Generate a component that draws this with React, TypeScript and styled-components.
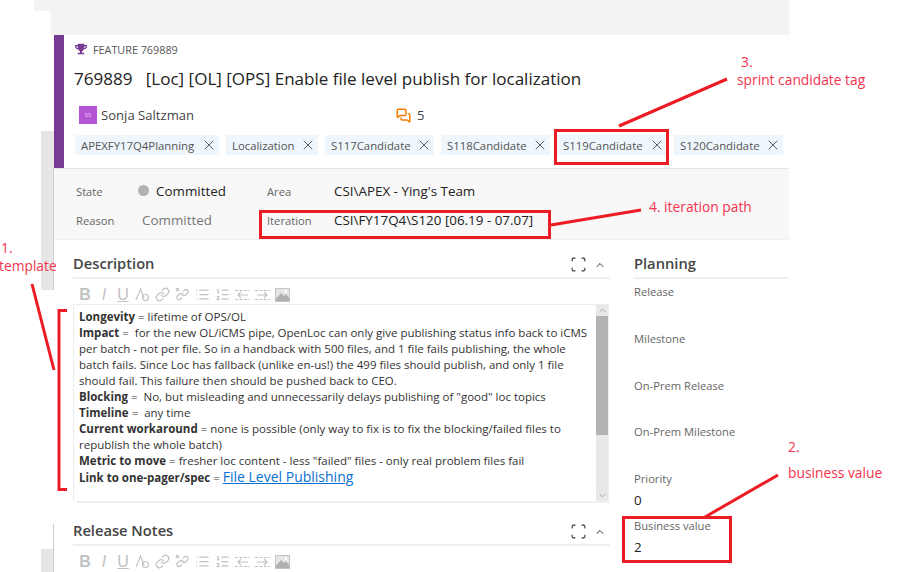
import * as React from 'react';
import styled, { createGlobalStyle } from 'styled-components';
import { FaTrophy } from 'react-icons/fa';
import { ChevronDown, ChevronUp, Link, List, ListOrdered, MessagesSquare, Scan, X } from 'lucide-react';

const GlobalStyle = createGlobalStyle`
    html, body {
        margin: 0;
        padding: 0;
        background: #ffffff;
    }
`;

const Page = styled.div`
    position: relative;
    width: 899px;
    height: 572px;
    overflow: hidden;
    display: grid;
    grid-template-columns: 54px 735px;
    font-family: "Open Sans", "Noto Sans", sans-serif;
    color: #222;
`;

const Gutter = styled.div`
    display: flex;
    flex-direction: column;
`;

const GutterBlock = styled.div<{ $h: number; $left?: number; $fill?: string; $rule?: boolean }>`
    height: ${p => p.$h}px;
    margin-left: ${p => p.$left || 0}px;
    background: ${p => p.$fill || 'transparent'};
    border-right: 1px solid ${p => (p.$rule ? '#cfcfcf' : 'transparent')};
    flex: none;
`;

const Main = styled.div`
    display: flex;
    flex-direction: column;
    min-width: 0;
`;

const TopBand = styled.div`
    height: 35px;
    background: #f3f3f3;
    flex: none;
`;

const Header = styled.header`
    height: 133px;
    box-sizing: border-box;
    border-left: 10px solid #773b93;
    padding: 5px 0 0 11px;
    flex: none;
`;

const TypeRow = styled.div`
    display: flex;
    align-items: center;
    gap: 6px;
    height: 18px;
    font-size: 10.8px;
    color: #555;
    svg { color: #773b93; width: 12px; height: 12px; }
`;

const Title = styled.h1`
    margin: 9px 0 0 -1px;
    font-size: 17.05px;
    line-height: 24px;
    font-weight: 400;
    color: #222;
    white-space: pre;
`;

const MetaRow = styled.div`
    display: flex;
    align-items: center;
    height: 20px;
    margin: 14px 0 0 4px;
    font-size: 13.1px;
    color: #444;
`;

const Avatar = styled.span`
    width: 18px;
    height: 18px;
    background: #b455d6;
    color: #e8c9f2;
    font-size: 6px;
    display: flex;
    align-items: center;
    justify-content: center;
    margin-right: 4px;
`;

const Comments = styled.span`
    display: flex;
    align-items: center;
    gap: 6px;
    margin-left: 202px;
    svg { color: #f57c00; }
`;

const TagRow = styled.div`
    display: flex;
    gap: 7px;
    margin-top: 10px;
`;

const Tag = styled.span`
    height: 20px;
    box-sizing: border-box;
    padding: 0 2px 0 6px;
    background: #eff6fc;
    font-size: 11.35px;
    color: #555;
    display: flex;
    align-items: center;
    justify-content: space-between;
    svg { color: #444; }
`;

const StateBlock = styled.section`
    height: 72px;
    box-sizing: border-box;
    background: #f8f8f8;
    border-top: 1px solid #e6e6e6;
    border-bottom: 1px solid #efefef;
    padding: 7px 0 0 22px;
    display: grid;
    grid-template-columns: 62px 129px 67px 1fr;
    grid-auto-rows: 29px;
    align-items: center;
    flex: none;
`;

const StateLabel = styled.span`
    font-size: 11.2px;
    color: #666;
    padding-top: 2px;
`;

const StateValue = styled.span<{ $muted?: boolean }>`
    font-size: 13.4px;
    color: ${p => (p.$muted ? '#777' : '#222')};
    padding-left: ${p => (p.$muted ? 4 : 0)}px;
    display: flex;
    align-items: center;
    gap: 7px;
`;

const Dot = styled.i`
    width: 11px;
    height: 11px;
    border-radius: 50%;
    background: #b2b2b2;
`;

const Columns = styled.div`
    display: grid;
    grid-template-columns: 537px 155px;
    gap: 24px;
    padding-left: 19px;
    flex: 1;
    min-height: 0;
`;

const EditorColumn = styled.div`
    display: flex;
    flex-direction: column;
    min-width: 0;
`;

const SectionHead = styled.div`
    height: 39px;
    box-sizing: border-box;
    border-bottom: 2px solid #efefef;
    display: flex;
    align-items: flex-end;
    justify-content: space-between;
    padding-bottom: 4px;
    flex: none;
`;

const SectionTitle = styled.h2`
    margin: 0;
    font-size: 14.7px;
    line-height: 20px;
    font-weight: 600;
    color: #444;
`;

const HeadIcons = styled.span`
    display: flex;
    align-items: center;
    gap: 7px;
    margin-right: 4px;
    color: #333;
`;

const Toolbar = styled.div`
    height: 25px;
    box-sizing: border-box;
    padding: 0 0 2px 5px;
    display: flex;
    align-items: flex-end;
    gap: 5px;
    color: #c2c2c2;
    flex: none;
    svg { flex: none; }
`;

const ToolLetter = styled.span<{ $kind: 'b' | 'i' | 'u' }>`
    width: 14px;
    text-align: center;
    font-size: 16px;
    line-height: 15px;
    font-family: "Liberation Sans", sans-serif;
    font-weight: ${p => (p.$kind === 'b' ? 700 : 400)};
    font-style: ${p => (p.$kind === 'i' ? 'italic' : 'normal')};
    text-decoration: ${p => (p.$kind === 'u' ? 'underline' : 'none')};
`;

const Editor = styled.div`
    width: 536px;
    height: 197px;
    box-sizing: border-box;
    border: 1px solid #ececec;
    border-bottom: none;
    display: flex;
    flex: none;
`;

const EditorText = styled.div`
    flex: 1;
    padding: 4px 0 0 5px;
    font-size: 11.5px;
    line-height: 16px;
    color: #333;
    b { font-weight: 700; }
    a { color: #0a6fd0; font-size: 14px; text-decoration: underline; }
`;

const ScrollBar = styled.div`
    width: 12px;
    background: #e8e8e8;
    display: flex;
    flex-direction: column;
    align-items: center;
    justify-content: space-between;
    color: #aaa;
    position: relative;
    flex: none;
`;

const ScrollThumb = styled.div`
    position: absolute;
    top: 11px;
    left: 0;
    right: 0;
    height: 119px;
    background: #b3b3b3;
`;

const EditorEnd = styled.div`
    width: 533px;
    margin-left: 4px;
    border-top: 2px solid #efefef;
    height: 0;
    flex: none;
`;

const Spacer = styled.div`
    height: 4px;
    flex: none;
`;

const PlanningColumn = styled.div`
    display: flex;
    flex-direction: column;
`;

const Field = styled.div`
    height: 46.8px;
    box-sizing: border-box;
    padding-top: 5px;
    flex: none;
`;

const FieldLabel = styled.div`
    font-size: 11.2px;
    line-height: 16px;
    color: #666;
`;

const FieldValue = styled.div`
    font-size: 13.4px;
    line-height: 18px;
    margin-top: 4px;
    color: #222;
`;

const Overlay = styled.svg`
    position: absolute;
    inset: 0;
    pointer-events: none;
`;

const Note = styled.span<{ $x: number; $y: number }>`
    position: absolute;
    left: ${p => p.$x}px;
    top: ${p => p.$y}px;
    font-size: 13.8px;
    line-height: 16px;
    color: #f5344e;
    white-space: nowrap;
`;

const tags: [string, number][] = [
    ['APEXFY17Q4Planning', 144],
    ['Localization', 92],
    ['S117Candidate', 109],
    ['S118Candidate', 109],
    ['S119Candidate', 110],
    ['S120Candidate', 109],
];

const ImageIcon = () => (
    <svg width="15" height="14" viewBox="0 0 15 14">
        <rect width="15" height="14" fill="#c4c4c4" />
        <rect x="1" y="1" width="13" height="9" fill="#e6e6e6" />
        <path d="M1 11 L6 5 L9 8 L11 6 L14 10 V13 H1 Z" fill="#b0b0b0" />
        <circle cx="11" cy="3.5" r="1.3" fill="#ffffff" />
    </svg>
);

const FontColorIcon = () => (
    <svg width="15" height="15" viewBox="0 0 15 15" fill="none" stroke="currentColor" strokeWidth="1.1">
        <path d="M1 13 L5.5 2 L9 11" />
        <circle cx="10.5" cy="10.5" r="3" />
    </svg>
);

const UnlinkIcon = () => (
    <svg width="15" height="15" viewBox="0 0 15 15" fill="none" stroke="currentColor" strokeWidth="1.2">
        <path d="M1 1 L4 4 M4 1 L1 4" />
        <path d="M6.5 8.5 L8.5 6.5" />
        <path d="M8 4.5 L10 2.5 a2.3 2.3 0 0 1 3 3 L10.5 8 a2.3 2.3 0 0 1 -2.5 0.5" />
        <path d="M7 10.5 L5 12.5 a2.3 2.3 0 0 1 -3 -3 L4.5 7 a2.3 2.3 0 0 1 2.5 -0.5" />
    </svg>
);

const ShiftIcon = ({ back }: { back?: boolean }) => (
    <svg width="15" height="14" viewBox="0 0 15 14" fill="none" stroke="currentColor" strokeWidth="1.2">
        <path d="M0 2.5 H15 M0 11.5 H15" strokeDasharray="3 1.5" />
        {back ? <path d="M13 7 H3 M6 4 L3 7 L6 10" /> : <path d="M2 7 H12 M9 4 L12 7 L9 10" />}
    </svg>
);

const EditorTools = () => (
    <Toolbar>
        <ToolLetter $kind="b">B</ToolLetter>
        <ToolLetter $kind="i">I</ToolLetter>
        <ToolLetter $kind="u">U</ToolLetter>
        <FontColorIcon />
        <Link size={15} />
        <UnlinkIcon />
        <List size={15} />
        <ListOrdered size={15} />
        <ShiftIcon back />
        <ShiftIcon />
        <ImageIcon />
    </Toolbar>
);

const SectionHeading = ({ title, icons }: { title: string; icons?: boolean }) => (
    <SectionHead>
        <SectionTitle>{title}</SectionTitle>
        {icons && (
            <HeadIcons>
                <Scan size={17} strokeWidth={1.5} />
                <ChevronUp size={12} />
            </HeadIcons>
        )}
    </SectionHead>
);

export default function App() {
    return (
        <Page>
            <GlobalStyle />
            <Gutter>
                <GutterBlock $h={11} $left={34} $fill="#f3f3f3" />
                <GutterBlock $h={24} $left={51} $fill="#f3f3f3" />
                <GutterBlock $h={96} />
                <GutterBlock $h={37} $left={41} $fill="#e6e6e6" />
                <GutterBlock $h={122} $left={41} $fill="#e6e6e6" $rule />
                <GutterBlock $h={234} />
                <GutterBlock $h={25} $rule />
                <GutterBlock $h={23} $left={41} $fill="#e6e6e6" $rule />
            </Gutter>
            <Main>
                <TopBand />
                <Header>
                    <TypeRow><FaTrophy />FEATURE 769889</TypeRow>
                    <Title>{'769889   [Loc] [OL] [OPS] Enable file level publish for localization'}</Title>
                    <MetaRow>
                        <Avatar>SS</Avatar>
                        Sonja Saltzman
                        <Comments><MessagesSquare size={15} strokeWidth={2.4} />5</Comments>
                    </MetaRow>
                    <TagRow>
                        {tags.map(([name, width]) => (
                            <Tag key={name} style={{ width }}>{name}<X size={16} strokeWidth={1.3} /></Tag>
                        ))}
                    </TagRow>
                </Header>
                <StateBlock>
                    <StateLabel>State</StateLabel>
                    <StateValue><Dot />Committed</StateValue>
                    <StateLabel>Area</StateLabel>
                    <StateValue>CSI\APEX - Ying's Team</StateValue>
                    <StateLabel>Reason</StateLabel>
                    <StateValue $muted>Committed</StateValue>
                    <StateLabel>Iteration</StateLabel>
                    <StateValue>CSI\FY17Q4\S120 [06.19 - 07.07]</StateValue>
                </StateBlock>
                <Columns>
                    <EditorColumn>
                        <SectionHeading title="Description" icons />
                        <EditorTools />
                        <Editor>
                            <EditorText>
                                <b>Longevity</b> = lifetime of OPS/OL<br />
                                <b>Impact</b> =&nbsp; for the new OL/iCMS pipe, OpenLoc can only give publishing status info back to iCMS per batch - not per file. So in a handback with 500 files, and 1 file fails publishing, the whole batch fails. Since Loc has fallback (unlike en-us!) the 499 files should publish, and only 1 file should fail. This failure then should be pushed back to CEO.<br />
                                <b>Blocking</b> =&nbsp; No, but misleading and unnecessarily delays publishing of "good" loc topics<br />
                                <b>Timeline</b> =&nbsp; any time<br />
                                <b>Current workaround</b> = none is possible (only way to fix is to fix the blocking/failed files to republish the whole batch)<br />
                                <b>Metric to move</b> = fresher loc content - less "failed" files - only real problem files fail<br />
                                <b>Link to one-pager/spec</b> = <a>File Level Publishing</a>
                            </EditorText>
                            <ScrollBar>
                                <ChevronUp size={11} />
                                <ScrollThumb />
                                <ChevronDown size={11} />
                            </ScrollBar>
                        </Editor>
                        <EditorEnd />
                        <Spacer />
                        <SectionHeading title="Release Notes" icons />
                        <EditorTools />
                    </EditorColumn>
                    <PlanningColumn>
                        <SectionHeading title="Planning" />
                        <Field><FieldLabel>Release</FieldLabel></Field>
                        <Field><FieldLabel>Milestone</FieldLabel></Field>
                        <Field><FieldLabel>On-Prem Release</FieldLabel></Field>
                        <Field><FieldLabel>On-Prem Milestone</FieldLabel></Field>
                        <Field><FieldLabel>Priority</FieldLabel><FieldValue>0</FieldValue></Field>
                        <Field><FieldLabel>Business value</FieldLabel><FieldValue>2</FieldValue></Field>
                    </PlanningColumn>
                </Columns>
            </Main>
            <Overlay width="899" height="572" viewBox="0 0 899 572" fill="none" stroke="#ed1c24" strokeWidth="3">
                <rect x="555.5" y="130.5" width="112" height="33" />
                <rect x="260.5" y="211.5" width="289" height="26" />
                <rect x="623.5" y="517.5" width="107" height="44" />
                <path d="M619 126 L727 79" />
                <path d="M551 225 L641 210" />
                <path d="M705 517 L778 475" />
                <path d="M32 284 L54 370" />
                <path d="M67 310.5 H59 V489.5 H67" />
            </Overlay>
            <Note $x={741} $y={54}>3.</Note>
            <Note $x={737} $y={72}>sprint candidate tag</Note>
            <Note $x={649} $y={199}>4. iteration path</Note>
            <Note $x={788} $y={439}>2.</Note>
            <Note $x={788} $y={465}>business value</Note>
            <Note $x={1} $y={240}>1.</Note>
            <Note $x={-1} $y={258}>template</Note>
        </Page>
    );
}
